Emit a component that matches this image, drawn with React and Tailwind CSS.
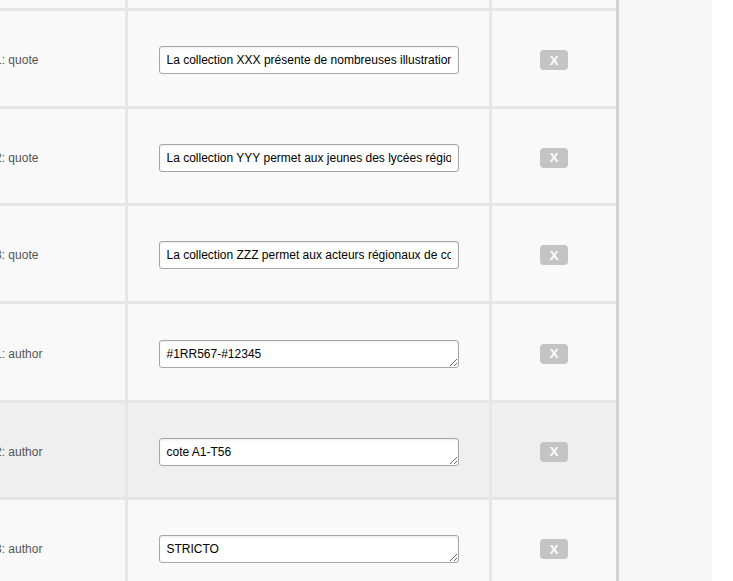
import React from "react";

const rows = [
  { n: "1", kind: "quote", value: "La collection XXX présente de nombreuses illustrations anciennes", area: false, h: "h-[95px]" },
  { n: "2", kind: "quote", value: "La collection YYY permet aux jeunes des lycées régionaux de découvrir", area: false, h: "h-[94px]" },
  { n: "3", kind: "quote", value: "La collection ZZZ permet aux acteurs régionaux de communiquer", area: false, h: "h-[95px]" },
  { n: "1", kind: "author", value: "#1RR567-#12345", area: true, h: "h-[96px]" },
  { n: "2", kind: "author", value: "cote A1-T56", area: true, hl: true, h: "h-[94px]" },
  { n: "3", kind: "author", value: "STRICTO", area: true, h: "h-[95px]" },
];

function Row({ r }) {
  const bg = r.hl ? "bg-[#efefef]" : "bg-[#f9f9f9]";
  return (
    <div className={`grid ${r.h} shrink-0 grid-cols-[125px_361px_124px] gap-x-[3px]`}>
      <div className={`${bg} flex items-center overflow-hidden pt-[3px]`}>
        <span className="-ml-[5px] whitespace-nowrap text-[12px] text-[#555555]">
          {r.n}: {r.kind}
        </span>
      </div>
      <div className={`${bg} flex items-center justify-center pt-[3px]`}>
        {r.area ? (
          <textarea
            readOnly
            rows={1}
            value={r.value}
            className="h-[28px] w-[300px] resize-y overflow-hidden rounded-[3px] border border-[#a6a6a6] bg-white px-[7px] pt-[6px] text-[12px] leading-[14px] text-black shadow-[inset_0_1px_2px_rgba(0,0,0,0.08)] outline-none"
          />
        ) : (
          <input
            readOnly
            value={r.value}
            className="h-[28px] w-[300px] rounded-[3px] border border-[#a6a6a6] bg-white px-[7px] text-[12px] text-black shadow-[inset_0_1px_2px_rgba(0,0,0,0.08)] outline-none"
          />
        )}
      </div>
      <div className={`${bg} flex items-center justify-center pt-[3px]`}>
        <button className="flex h-[20px] w-[28px] items-center justify-center rounded-[4px] bg-[#c4c4c4] text-[13px] font-bold leading-none text-white">
          X
        </button>
      </div>
    </div>
  );
}

export default function App() {
  return (
    <div className="flex h-[581px] w-[733px] overflow-hidden bg-white font-['Liberation_Sans',Arial,sans-serif]">
      <div className="flex h-full w-[619px] shrink-0 flex-col gap-y-[3px] overflow-hidden border-r-[3px] border-[#d2d2d2] bg-[#e6e6e6]">
        <div className="grid h-[8px] shrink-0 grid-cols-[125px_361px_124px] gap-x-[3px]">
          <div className="bg-[#f9f9f9]" />
          <div className="bg-[#f9f9f9]" />
          <div className="bg-[#f9f9f9]" />
        </div>
        {rows.map((r, i) => (
          <Row key={i} r={r} />
        ))}
      </div>
      <div className="h-full w-[93px] shrink-0 bg-[#f6f6f6]" />
      <div className="h-full flex-1 bg-white" />
    </div>
  );
}
